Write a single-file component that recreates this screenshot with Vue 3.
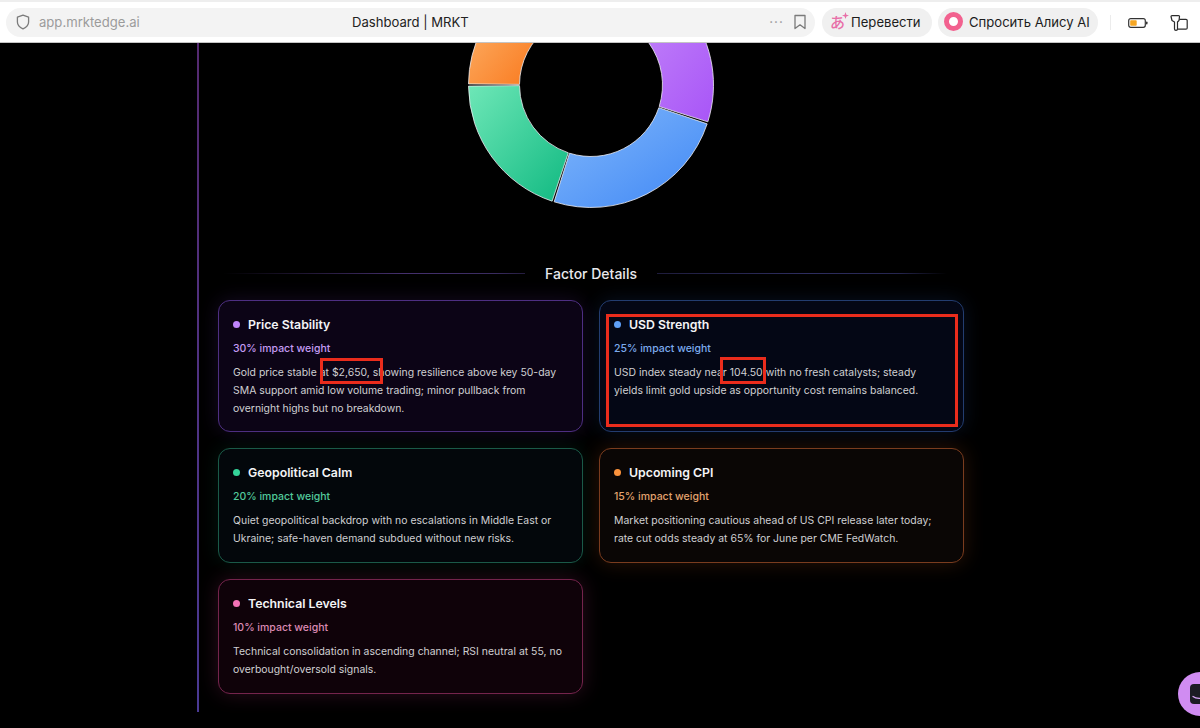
<script setup>
const slices = [
  { id: 'purple', from: '#cf9bfa', to: '#a855f7', start: 0, end: 108 },
  { id: 'blue', from: '#82b8fb', to: '#3f87f5', start: 108, end: 198 },
  { id: 'green', from: '#6ee7b7', to: '#10b981', start: 198, end: 270 },
  { id: 'orange', from: '#fdba74', to: '#f97316', start: 270, end: 324 },
  { id: 'pink', from: '#f9a8d4', to: '#ec4899', start: 324, end: 360 }
]
const CX = 123, CY = 123, RO = 122.5, RI = 71.5
const GAP = 0.5
function pt(r, a) {
  const t = (a * Math.PI) / 180
  return `${(CX + r * Math.sin(t)).toFixed(2)} ${(CY - r * Math.cos(t)).toFixed(2)}`
}
function arc(s) {
  const large = s.end - s.start > 180 ? 1 : 0
  return `M${pt(RO, s.start + GAP)} A${RO} ${RO} 0 ${large} 1 ${pt(RO, s.end - GAP)} L${pt(RI, s.end - GAP)} A${RI} ${RI} 0 ${large} 0 ${pt(RI, s.start + GAP)} Z`
}
const cards = [
  { key: 'purple', title: 'Price Stability', weight: '30% impact weight', text: 'Gold price stable at $2,650, showing resilience above key 50-day SMA support amid low volume trading; minor pullback from overnight highs but no breakdown.' },
  { key: 'blue', title: 'USD Strength', weight: '25% impact weight', text: 'USD index steady near 104.50 with no fresh catalysts; steady yields limit gold upside as opportunity cost remains balanced.' },
  { key: 'green', title: 'Geopolitical Calm', weight: '20% impact weight', text: 'Quiet geopolitical backdrop with no escalations in Middle East or Ukraine; safe-haven demand subdued without new risks.' },
  { key: 'orange', title: 'Upcoming CPI', weight: '15% impact weight', text: 'Market positioning cautious ahead of US CPI release later today; rate cut odds steady at 65% for June per CME FedWatch.' },
  { key: 'pink', title: 'Technical Levels', weight: '10% impact weight', text: 'Technical consolidation in ascending channel; RSI neutral at 55, no overbought/oversold signals.' }
]
</script>

<template>
  <div class="page">
    <header class="toolbar">
      <div class="address">
        <svg class="shield" viewBox="0 0 14 16" width="14" height="16" aria-hidden="true">
          <path d="M7 1.200 12.600 3.200V8c0 3.200-2.400 5.400-5.600 6.800C3.800 13.400 1.400 11.200 1.400 8V3.200Z" fill="none" stroke="#7c7c7c" stroke-width="1.300" stroke-linejoin="round" />
        </svg>
        <span class="url">app.mrktedge.ai</span>
        <span class="page-title">Dashboard | MRKT</span>
        <span class="dots">•••</span>
        <svg class="bookmark" viewBox="0 0 14 16" width="14" height="16" aria-hidden="true">
          <path d="M2 1.500H12V14.500L7 10.800 2 14.500Z" fill="none" stroke="#7a7a7a" stroke-width="1.300" stroke-linejoin="round" />
        </svg>
      </div>
      <div class="pill translate">
        <span class="hira">あ
          <svg class="sparkle" viewBox="0 0 8 8" width="7" height="7" aria-hidden="true">
            <path d="M4 0 5 3 8 4 5 5 4 8 3 5 0 4 3 3Z" fill="#e86fa8" />
          </svg>
        </span>
        <span>Перевести</span>
      </div>
      <div class="pill alice">
        <span class="alice-ring"></span>
        <span>Спросить Алису AI</span>
      </div>
      <span class="divider"></span>
      <svg class="battery" viewBox="0 0 20 12" width="20" height="12" aria-hidden="true">
        <rect x="0.700" y="1.700" width="16.600" height="8.600" rx="2" fill="#fff" stroke="#333" stroke-width="1.200" />
        <rect x="2.200" y="3.200" width="6.500" height="5.600" rx="0.800" fill="#f5a623" />
        <rect x="18" y="4.500" width="1.500" height="3" rx="0.700" fill="#333" />
      </svg>
      <svg class="tabs-icon" viewBox="0 0 18 16" width="18" height="16" aria-hidden="true">
        <path d="M1 1.500C1 .9 1.400.6 2 .6H8.500C9.200.6 9.600 1 9.500 1.700L9 5.500 7.500 7V14C7.500 14.900 7 15.400 6 15.400 5 15.400 4.500 14.900 4.500 14V7L2 5.500Z" fill="none" stroke="#2c2c2c" stroke-width="1.200" stroke-linejoin="round" />
        <path d="M9.300 4.400H16C16.700 4.400 17.200 4.900 17.200 5.600V13C17.200 13.700 16.700 14.200 16 14.200H7.500" fill="none" stroke="#2c2c2c" stroke-width="1.200" stroke-linejoin="round" />
      </svg>
    </header>

    <main class="content">
      <svg class="donut" viewBox="0 81 246 170" width="246" height="170" aria-label="Impact weight donut chart">
        <defs>
          <linearGradient v-for="s in slices" :id="'grad-' + s.id" :key="s.id" x1="0" y1="0" x2="1" y2="1">
            <stop offset="0" :stop-color="s.from" />
            <stop offset="1" :stop-color="s.to" />
          </linearGradient>
        </defs>
        <path v-for="s in slices" :key="s.id" :d="arc(s)" :fill="'url(#grad-' + s.id + ')'" stroke="#eeeef2" stroke-width="0.800" />
      </svg>

      <div class="heading">
        <span class="rule rule-left"></span>
        <h2>Factor Details</h2>
        <span class="rule rule-right"></span>
      </div>

      <div class="grid">
        <article v-for="c in cards" :key="c.key" class="card" :class="c.key">
          <h3><span class="dot"></span>{{ c.title }}</h3>
          <p class="weight">{{ c.weight }}</p>
          <p class="body">{{ c.text }}</p>
          <template v-if="c.key === 'purple'">
            <span class="mark mark-price"></span>
          </template>
          <template v-if="c.key === 'blue'">
            <span class="mark mark-block"></span>
            <span class="mark mark-index"></span>
          </template>
        </article>
      </div>
    </main>

    <div class="chat-bubble">
      <svg viewBox="0 0 20 20" width="20" height="20" aria-hidden="true">
        <rect x="0" y="0" width="20" height="20" rx="4" fill="#1c1c24" />
        <path d="M3 12.500C6 15 12 15 17 13" fill="none" stroke="#d9a6f7" stroke-width="1.200" stroke-linecap="round" />
      </svg>
    </div>
  </div>
</template>

<style>
html, body { margin: 0; background: #000; }
</style>

<style scoped>
.page {
  position: relative;
  width: 1200px;
  height: 728px;
  overflow: hidden;
  background: #000;
  font-family: Inter, "Liberation Sans", sans-serif;
}
.toolbar {
  display: flex;
  align-items: center;
  box-sizing: border-box;
  height: 43px;
  padding: 1px 0 0 6px;
  background: #fff;
  border-top: 2px solid #eeeeee;
  border-bottom: 1px solid #c4c4c4;
  color: #1c1c1c;
}
.address {
  display: flex;
  align-items: center;
  box-sizing: border-box;
  width: 809px;
  height: 29px;
  padding: 0 8px 2px 10px;
  border-radius: 15px;
  background: #f3f3f3;
}
.url { margin-left: 9px; width: 313px; color: #9b9b9b; font-size: 13.100px; }
.page-title { width: 117px; white-space: nowrap; font-size: 13.100px; color: #222; }
.dots { margin-left: auto; margin-right: 9px; font-size: 6px; letter-spacing: 1.500px; color: #9a9a9a; }
.pill {
  display: flex;
  align-items: center;
  height: 29px;
  box-sizing: border-box;
  padding-bottom: 2px;
  border-radius: 15px;
  background: #f0f0f0;
  white-space: nowrap;
  font-size: 13.100px;
}
.translate { width: 110px; margin-left: 7px; padding-left: 8px; gap: 5px; }
.hira {
  position: relative;
  width: 16px;
  color: #e86fa8;
  font: 500 15px "Noto Sans CJK JP", sans-serif;
}
.sparkle { position: absolute; right: -3px; top: 1px; }
.alice { width: 160px; margin-left: 6px; padding-left: 6px; gap: 6px; }
.alice-ring {
  box-sizing: border-box;
  width: 19px;
  height: 19px;
  border: 5px solid #f2618f;
  border-radius: 50%;
  background: #fff;
}
.divider { width: 1px; height: 15px; margin-left: 12px; background: #ececec; }
.battery { margin-left: 17px; }
.tabs-icon { margin-left: 22px; }

.content {
  box-sizing: border-box;
  width: 786px;
  height: 669px;
  margin-left: 197px;
  padding-left: 19px;
  border-left: 2px solid;
  border-image: linear-gradient(180deg, #552a70, #4a3a94) 1;
  background: #000;
}
.donut { display: block; margin-left: 249.500px; }
.heading {
  display: flex;
  align-items: center;
  gap: 20px;
  width: 746px;
  margin-top: 52px;
  padding: 0 5px;
  box-sizing: border-box;
}
.heading h2 {
  margin: 0;
  font-size: 14px;
  font-weight: 500;
  color: #e8e8ec;
  white-space: nowrap;
}
.rule { flex: 1; height: 1px; }
.rule-left { background: linear-gradient(90deg, transparent, #45306e 60%, #3a2c60 90%, #241c3e); }
.rule-right { background: linear-gradient(90deg, #1e1c3c, #2e2e60 50%, #262650 80%, transparent 96%); }
.grid {
  display: grid;
  grid-template-columns: 365px 365px;
  grid-template-rows: 132px 115px 115px;
  gap: 16px;
  margin-top: 18px;
}
.card {
  position: relative;
  box-sizing: border-box;
  padding: 14px 14px 0;
  border: 1px solid;
  border-radius: 12px;
}
.card h3 {
  display: flex;
  align-items: center;
  gap: 8px;
  margin: 0;
  height: 18px;
  font-size: 12.300px;
  font-weight: 600;
  color: #f4f4f6;
}
.dot { width: 7px; height: 7px; border-radius: 50%; background: currentColor; }
.weight { margin: 8px 0 0; font-size: 10.500px; line-height: 16px; font-weight: 500; }
.body { max-width: 330px; margin: 7px 0 0; font-size: 10.450px; line-height: 18px; color: #cfcfd2; }

.purple { background: #0c0416; border-color: #4e2f82; box-shadow: 0 0 20px rgba(120, 60, 200, 0.18); }
.purple .dot { color: #c084fc; }
.purple .weight { color: #c59bf3; }
.blue { background: #040715; border-color: #233d70; box-shadow: 0 0 20px rgba(60, 120, 240, 0.14); }
.blue .dot { color: #5fa0f8; }
.blue .weight { color: #7cabee; }
.green { background: #03070b; border-color: #1a5a48; box-shadow: 0 0 20px rgba(30, 180, 120, 0.12); }
.green .dot { color: #34d399; }
.green .weight { color: #52c99b; }
.orange { background: #0a0605; border-color: #7a3c1e; box-shadow: 0 0 20px rgba(240, 110, 40, 0.18); }
.orange .dot { color: #fb923c; }
.orange .weight { color: #e3a36e; }
.pink { background: #0f0209; border-color: #74244c; box-shadow: 0 0 20px rgba(236, 72, 153, 0.18); }
.pink .dot { color: #f472b6; }
.pink .weight { color: #db8ab4; }

.mark { position: absolute; box-sizing: border-box; border: 3px solid #ea2c1c; pointer-events: none; }
.mark-price { left: 101px; top: 57px; width: 63px; height: 26px; }
.mark-block { left: 6px; top: 13px; width: 352px; height: 113px; }
.mark-index { left: 120px; top: 56px; width: 46px; height: 27px; }

.chat-bubble {
  position: absolute;
  right: -22px;
  top: 672px;
  display: flex;
  align-items: center;
  justify-content: center;
  width: 44px;
  height: 44px;
  border-radius: 50%;
  background: #d08cf2;
}
</style>
